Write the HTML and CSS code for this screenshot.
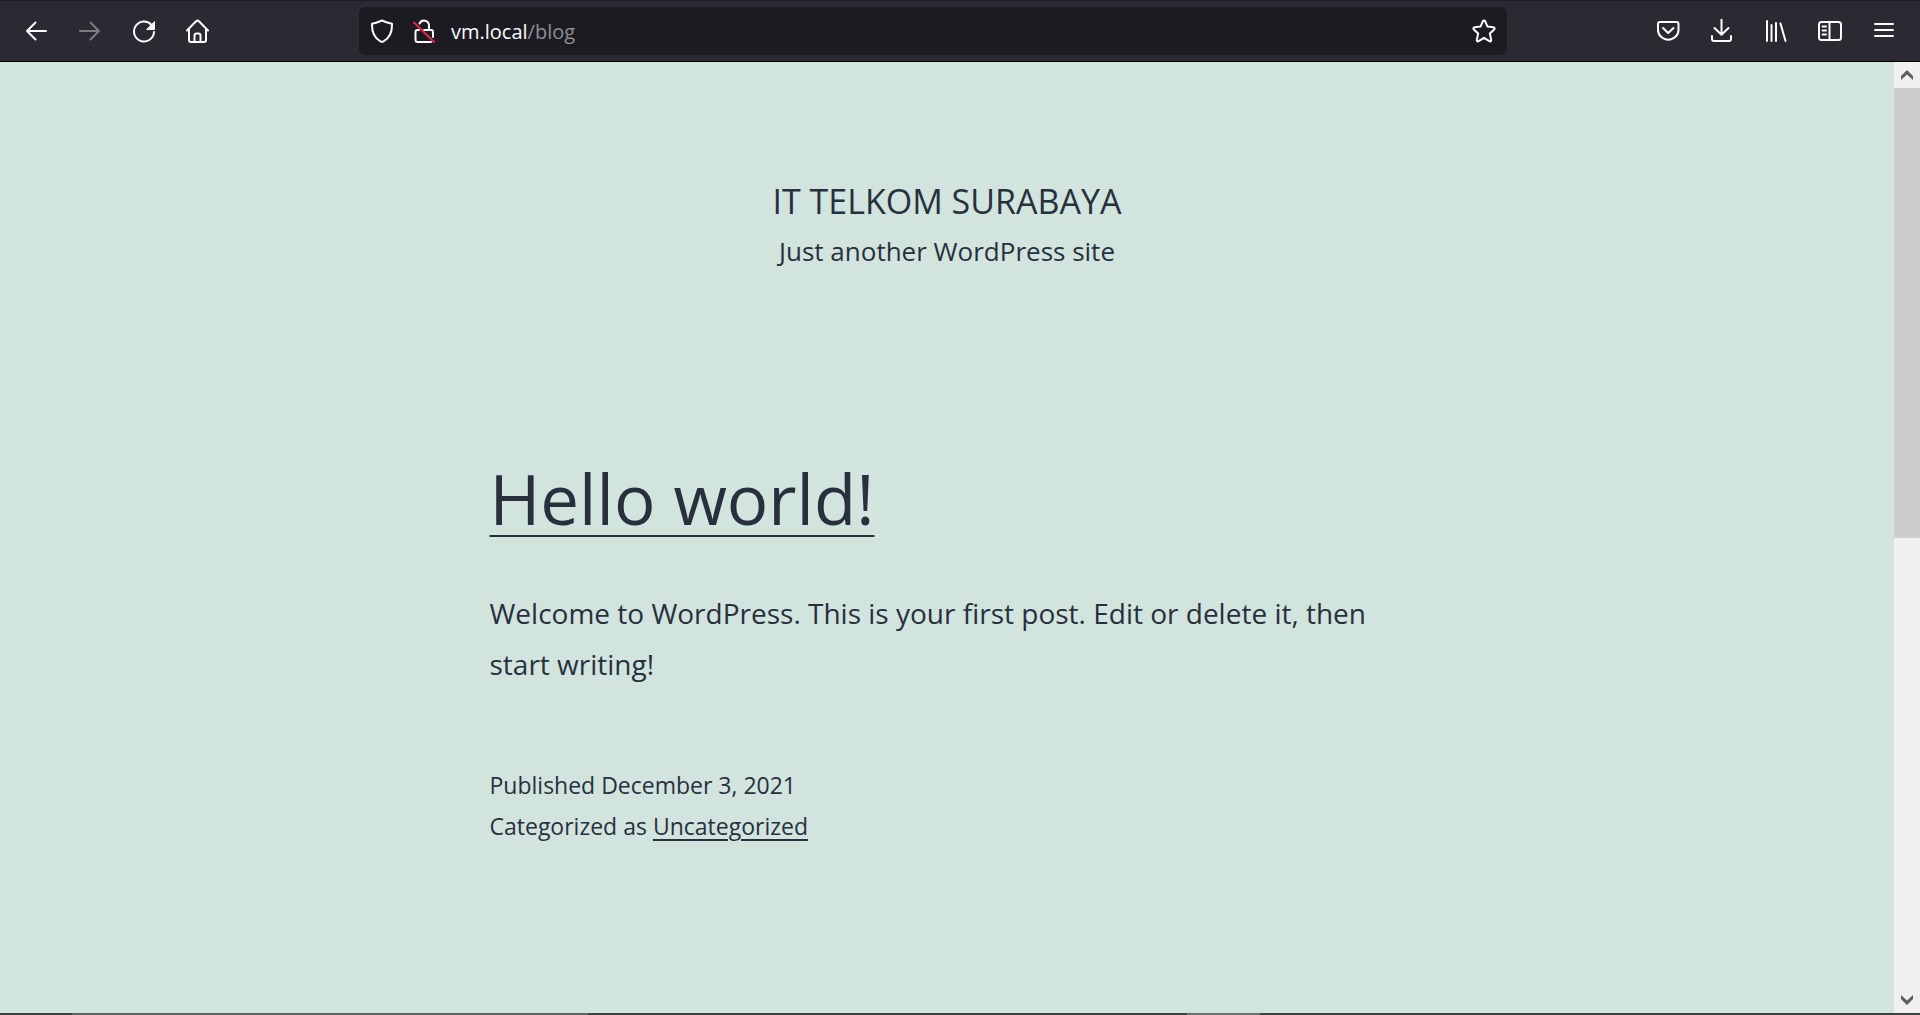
FILE: index.html
```html
<!DOCTYPE html>
<html lang="en">
<head>
<meta charset="utf-8">
<title>IT TELKOM SURABAYA</title>
<link rel="stylesheet" href="styles.css">
</head>
<body>
<div class="browser">
  <header class="toolbar">
    <div class="tools">
      <button class="tool" aria-label="Back"><svg viewBox="0 0 24 24"><path d="M22 12H3M11.500 3.500L3 12l8.500 8.500"/></svg></button>
      <button class="tool" aria-label="Forward" disabled><svg viewBox="0 0 24 24"><path d="M2 12h19M12.500 3.500L21 12l-8.500 8.500"/></svg></button>
      <button class="tool" aria-label="Reload"><svg viewBox="0 0 24 24"><path d="M19.500 5.800A10 10 0 1 0 22 13"/><path class="solid" d="M22.500 3v7.500H15z"/></svg></button>
      <button class="tool" aria-label="Home"><svg viewBox="0 0 24 24"><path d="M1 11.500L10.100 2.300a2 2 0 0 1 2.800 0l9.100 9.200M3 9.800V21a2 2 0 0 0 2 2h13a2 2 0 0 0 2-2V9.800M8.500 23v-6.500a2 2 0 0 1 2-2h2a2 2 0 0 1 2 2V23"/></svg></button>
    </div>
    <div class="address">
      <svg class="icon" viewBox="0 0 24 24"><path d="M12 1.500c3.400 1.500 6.700 2.600 10 3.300.3 8.500-3 14.500-8.500 17.600a3 3 0 0 1-3 0C5 19.300 1.700 13.300 2 4.800 5.300 4.100 8.600 3 12 1.500z"/></svg>
      <svg class="icon" viewBox="0 0 24 24"><path d="M7.500 4.500a5 5 0 0 1 9.500 2V11M12 11h7a2 2 0 0 1 2 2v5M7 11H5.500a2 2 0 0 0-2 2v8a2 2 0 0 0 2 2H19"/><path class="slash" d="M2 3.500L22 23"/></svg>
      <a class="url" href="#post"><span class="host">vm.local</span>/blog</a>
      <button class="star" aria-label="Bookmark this page"><svg viewBox="0 0 24 24"><path d="M10.900 2.200a1.200 1.200 0 0 1 2.200 0l2.400 5.400 6 .7a1.200 1.200 0 0 1 .7 2.100l-4.400 4 1.400 6.400a1.200 1.200 0 0 1-1.800 1.400L12 18.800l-5.400 3.400a1.200 1.200 0 0 1-1.800-1.400l1.400-6.400-4.400-4a1.200 1.200 0 0 1 .7-2.100l6-.7z"/></svg></button>
    </div>
    <div class="tools">
      <button class="tool" aria-label="Save to Pocket"><svg viewBox="0 0 24 24"><path d="M4 3h16.500a2 2 0 0 1 2 2v6a10.200 9.600 0 0 1-20.500 0V5a2 2 0 0 1 2-2z"/><path d="M7 9l5.200 5L17.500 9"/></svg></button>
      <button class="tool" aria-label="Downloads"><svg viewBox="0 0 24 24"><path d="M11.500 0v15.500M4.500 9l7 6.800 7-6.800M2 17v3a2 2 0 0 0 2 2h15a2 2 0 0 0 2-2v-3"/></svg></button>
      <button class="tool" aria-label="Library"><svg viewBox="0 0 24 24"><path d="M3 2v20M7.500 6v16M12 4v18M16.500 4.500L21.500 22"/></svg></button>
      <button class="tool" aria-label="Sidebars"><svg viewBox="0 0 24 24"><rect x="1" y="3" width="22" height="18" rx="2.500"/><path d="M11.500 3v18M4.500 7.500h3.500M4.500 11.500h3.500M4.500 15.500h3.500"/></svg></button>
      <button class="tool" aria-label="Open menu"><svg viewBox="0 0 24 24"><path d="M3 5h18M3 11h18M3 17h18"/></svg></button>
    </div>
  </header>
  <div class="viewport">
    <main class="page">
      <header class="site">
        <h1 class="site-title">IT TELKOM SURABAYA</h1>
        <p class="tagline">Just another WordPress site</p>
      </header>
      <article class="post" id="post">
        <h2 class="post-title"><a href="#post">Hello world!</a></h2>
        <p class="excerpt">Welcome to WordPress. This is your first post. Edit or delete it, then start writing!</p>
        <footer class="meta">
          <p>Published December 3, 2021</p>
          <p>Categorized as <a href="#post">Uncategorized</a></p>
        </footer>
      </article>
    </main>
    <div class="scrollbar">
      <button class="arrow" aria-label="Scroll up"><svg viewBox="0 0 14 12"><path d="M1 11V7l6-6 6 6v4L7 5.500z"/></svg></button>
      <div class="track"><div class="thumb"></div></div>
      <button class="arrow" aria-label="Scroll down"><svg viewBox="0 0 14 12"><path d="M1 1v4l6 6 6-6V1L7 6.500z"/></svg></button>
    </div>
  </div>
  <div class="edge"></div>
</div>
</body>
</html>
```
FILE: styles.css
```css
* { box-sizing: border-box; }
body {
  margin: 0;
  background: #d1e4dd;
  color: #28303d;
  font-family: "Open Sans", "Noto Sans", sans-serif;
}
h1, h2, p { margin: 0; font-weight: 400; }
a { color: inherit; }
button { border: 0; padding: 0; background: none; color: inherit; }

.browser { display: flex; flex-direction: column; height: 100vh; }

.toolbar {
  display: flex;
  align-items: center;
  height: 62px;
  padding: 0 9px;
  background: #2b2a33;
  border-top: 1px solid #1c1b22;
  border-bottom: 1px solid #000;
  color: #fbfbfe;
}
.tools { display: flex; }
.tool { width: 54px; height: 48px; display: grid; place-items: center; }
.tool:disabled { color: #7c7b82; }
.toolbar svg {
  display: block;
  width: 24px;
  height: 24px;
  fill: none;
  stroke: currentColor;
  stroke-width: 2;
  stroke-linecap: round;
  stroke-linejoin: round;
}
.toolbar .solid { fill: currentColor; stroke-width: 1; }
.toolbar .slash { stroke: #e22850; }

.address {
  flex: 1;
  display: flex;
  align-items: center;
  height: 48px;
  margin: 0 134px;
  padding: 0 11px;
  border-radius: 6px;
  background: #1c1b22;
}
.icon + .icon { margin-left: 18px; }
.url {
  flex: 1;
  margin-left: 15px;
  padding-top: 2px;
  font-size: 20px;
  line-height: 30px;
  color: #8f8f94;
  text-decoration: none;
}
.host { color: #fbfbfe; }

.viewport { flex: 1; display: flex; min-height: 0; }
.page { flex: 1; overflow: hidden; }
.site { padding-top: 113px; text-align: center; }
.site-title { font-size: 34px; line-height: 52px; }
.tagline { font-size: 26px; line-height: 48px; }
.post { max-width: 915px; margin: 177px auto 0; }
.post-title { font-size: 69px; line-height: 92px; }
.post-title a {
  text-decoration-thickness: 2px;
  text-underline-offset: 10px;
}
.excerpt { margin-top: 44px; font-size: 28px; line-height: 51px; }
.meta { margin-top: 75px; font-size: 23px; line-height: 41px; }
.meta a { text-decoration-thickness: 2px; text-underline-offset: 4px; }

.scrollbar { display: flex; flex-direction: column; width: 26px; background: #f0f0f0; }
.arrow { height: 26px; display: grid; place-items: center; }
.arrow svg { display: block; width: 14px; height: 12px; fill: #606060; }
.track { flex: 1; }
.thumb { height: 50%; background: #cdcdcd; }

.edge {
  height: 2px;
  background: linear-gradient(to right, #3c4442 72px, #5f6462 72px 588px, #3c4442 588px 1187px, #6a706d 1187px 1260px, #3c4442 1260px);
}
```
